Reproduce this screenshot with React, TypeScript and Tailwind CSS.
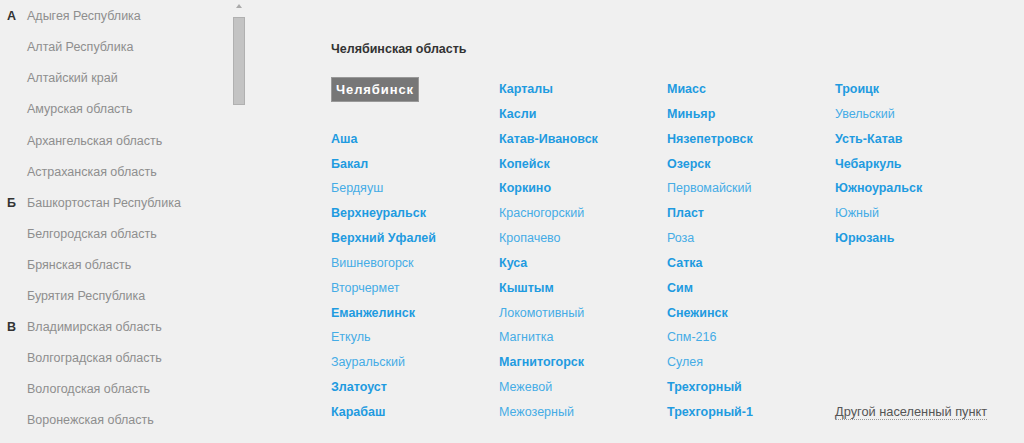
const regions: [string, string][] = [
  ["А", "Адыгея Республика"],
  ["", "Алтай Республика"],
  ["", "Алтайский край"],
  ["", "Амурская область"],
  ["", "Архангельская область"],
  ["", "Астраханская область"],
  ["Б", "Башкортостан Республика"],
  ["", "Белгородская область"],
  ["", "Брянская область"],
  ["", "Бурятия Республика"],
  ["В", "Владимирская область"],
  ["", "Волгоградская область"],
  ["", "Вологодская область"],
  ["", "Воронежская область"],
];

// name + bold flag; null = empty slot
type City = [string, boolean] | null;

const columns: City[][] = [
  [
    null,
    null,
    ["Аша", true],
    ["Бакал", true],
    ["Бердяуш", false],
    ["Верхнеуральск", true],
    ["Верхний Уфалей", true],
    ["Вишневогорск", false],
    ["Вторчермет", false],
    ["Еманжелинск", true],
    ["Еткуль", false],
    ["Зауральский", false],
    ["Златоуст", true],
    ["Карабаш", true],
  ],
  [
    ["Карталы", true],
    ["Касли", true],
    ["Катав-Ивановск", true],
    ["Копейск", true],
    ["Коркино", true],
    ["Красногорский", false],
    ["Кропачево", false],
    ["Куса", true],
    ["Кыштым", true],
    ["Локомотивный", false],
    ["Магнитка", false],
    ["Магнитогорск", true],
    ["Межевой", false],
    ["Межозерный", false],
  ],
  [
    ["Миасс", true],
    ["Миньяр", true],
    ["Нязепетровск", true],
    ["Озерск", true],
    ["Первомайский", false],
    ["Пласт", true],
    ["Роза", false],
    ["Сатка", true],
    ["Сим", true],
    ["Снежинск", true],
    ["Спм-216", false],
    ["Сулея", false],
    ["Трехгорный", true],
    ["Трехгорный-1", true],
  ],
  [
    ["Троицк", true],
    ["Увельский", false],
    ["Усть-Катав", true],
    ["Чебаркуль", true],
    ["Южноуральск", true],
    ["Южный", false],
    ["Юрюзань", true],
    null,
    null,
    null,
    null,
    null,
    null,
    null,
  ],
];

export default function App() {
  return (
    <div className="flex h-[443px] w-[1024px] overflow-hidden bg-[#f0f0f0] font-['Liberation_Sans',Arial,sans-serif] text-[12.5px]">
      {/* region list */}
      <aside className="flex w-[250px] shrink-0">
        <ul className="w-[232px] pt-[1px]">
          {regions.map(([letter, name]) => (
            <li key={name} className="flex h-[31.1px] items-center">
              <span className="w-[27px] pl-[7px] font-bold text-[#333]">{letter}</span>
              <span className="text-[#8e8e8e]">{name}</span>
            </li>
          ))}
        </ul>
        <div className="flex w-[13px] flex-col items-center pt-[4px]">
          <div className="h-0 w-0 border-x-[3px] border-b-[4px] border-x-transparent border-b-[#aaa]" />
          <div className="mt-[9px] h-[88px] w-[12px] border border-[#b0b0b0] bg-[#c3c3c3]" />
        </div>
      </aside>

      {/* cities */}
      <main className="pl-[81px] pt-[40px]">
        <h2 className="h-[37px] font-bold text-[#333]">Челябинская область</h2>
        <div className="flex">
          {columns.map((col, ci) => (
            <ul key={ci} className="w-[168px]">
              {col.map((c, ri) => {
                if (ci === 0 && ri === 0) {
                  return (
                    <li key={ri} className="flex h-[24.85px] items-center">
                      <span className="border border-[#999] bg-[#777] px-[4px] py-[2px] text-[13px] font-bold tracking-[0.9px] text-white">
                        Челябинск
                      </span>
                    </li>
                  );
                }
                if (ci === 3 && ri === 13) {
                  return (
                    <li key={ri} className="flex h-[24.85px] items-center">
                      <span className="border-b border-dotted border-[#999] text-[12.8px] leading-[14px] text-[#555]">
                        Другой населенный пункт
                      </span>
                    </li>
                  );
                }
                return (
                  <li key={ri} className="flex h-[24.85px] items-center">
                    {c && (
                      <a
                        href="#"
                        className={c[1] ? "font-bold text-[#1f9be0]" : "text-[#45ace6]"}
                      >
                        {c[0]}
                      </a>
                    )}
                  </li>
                );
              })}
            </ul>
          ))}
        </div>
      </main>
    </div>
  );
}
